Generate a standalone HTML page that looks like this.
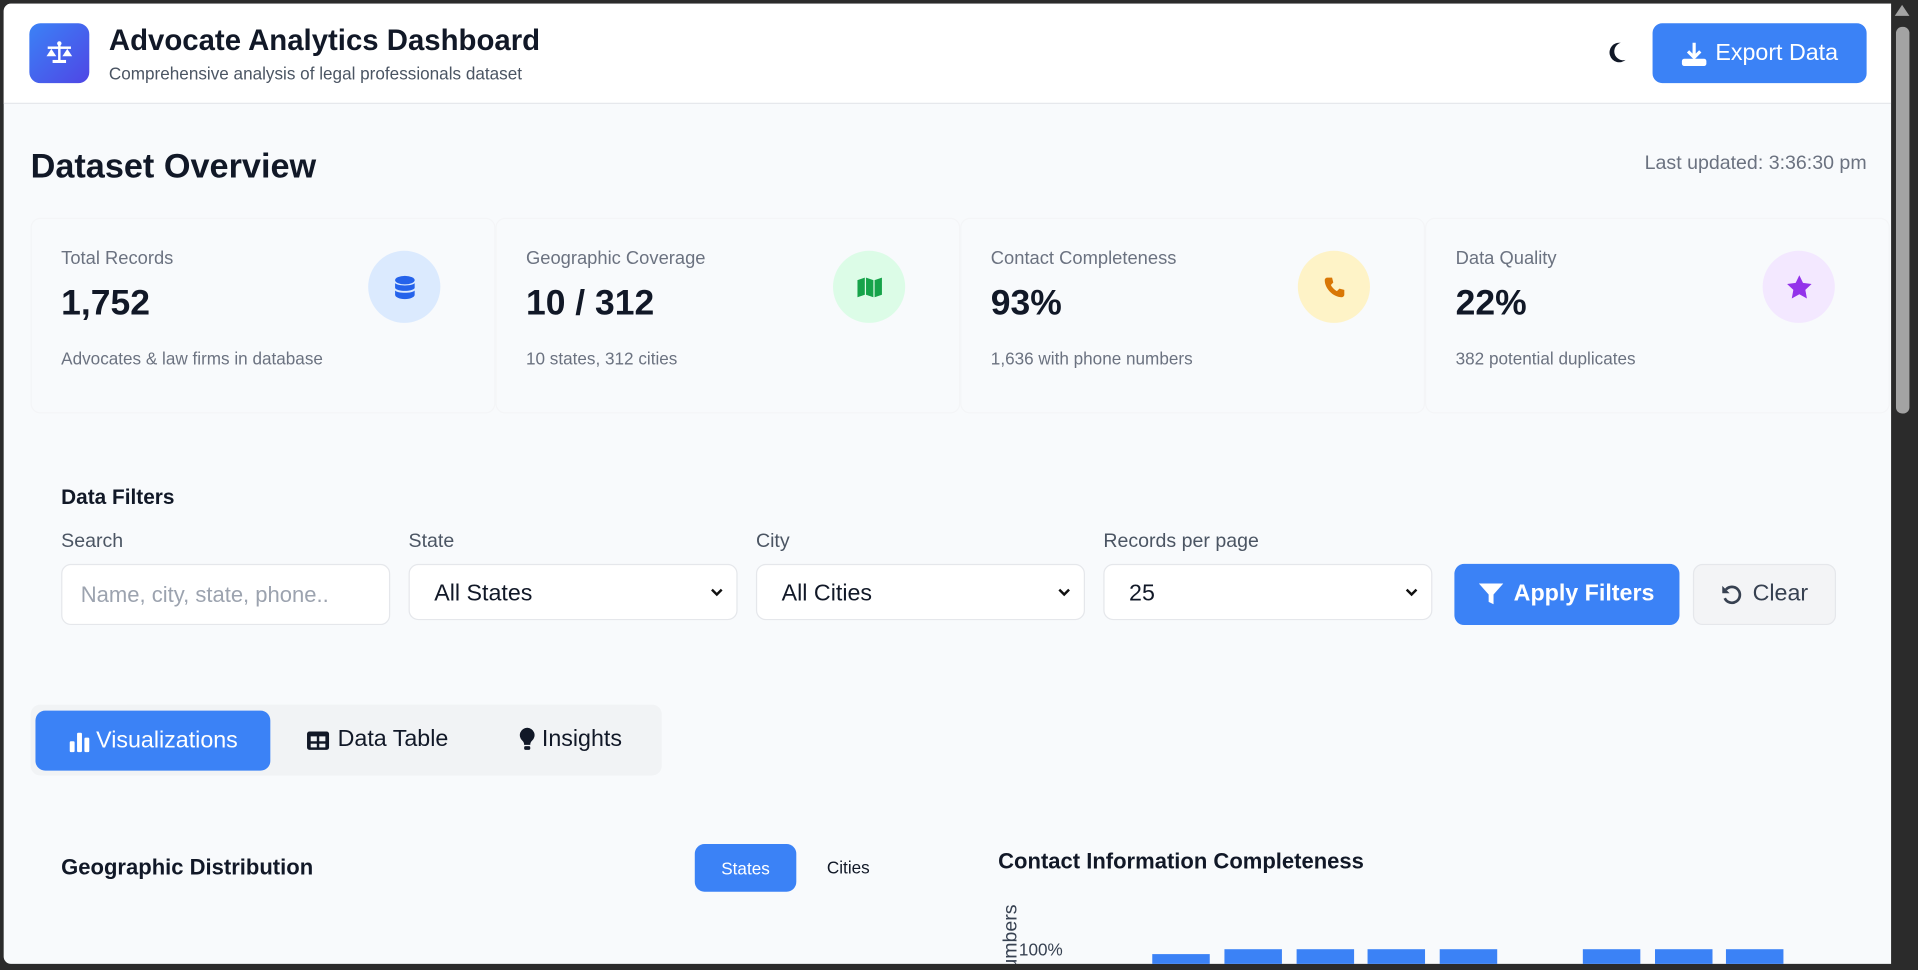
<!DOCTYPE html>
<html><head><meta charset="utf-8"><style>
*{box-sizing:border-box;margin:0;padding:0}
html,body{width:1918px;height:970px;overflow:hidden;background:#2b2b2b}
#w{position:absolute;left:0;top:0;width:1568px;height:793px;transform:scale(1.22321);transform-origin:0 0;font-family:"Liberation Sans",sans-serif;color:#111827}
.win{position:absolute;left:3px;top:3px;width:1543px;height:785px;background:#f8fafc;overflow:hidden;border-radius:6px 0 0 6px}
.hdr{position:absolute;left:0;top:0;width:1543px;height:82px;background:#fff;border-bottom:1px solid #e5e7eb}
.abs{position:absolute}
.logo{left:21px;top:16px;width:49px;height:49px;border-radius:9px;background:linear-gradient(135deg,#3b82f6,#4f46e5)}
.btn{background:#3b82f6;color:#fff;border-radius:8px;display:flex;align-items:center;justify-content:center}
.lbl{font-size:15px;color:#6b7280}
.val{font-size:29px;font-weight:bold;color:#111827}
.desc{font-size:14px;color:#6b7280}
.circ{width:59px;height:59px;border-radius:50%;display:flex;align-items:center;justify-content:center}
.card{top:175px;width:380px;height:160px;border:1px solid #f4f5f7;border-radius:8px}
.inp{top:458px;height:50px;border:1px solid #e5e7eb;border-radius:8px;background:#fff;font-size:19px;display:flex;align-items:center;padding-left:20px}
.sel{height:46px}
.chev{position:absolute;right:10px;top:16px}
.bar{position:absolute;background:#3b82f6;width:47px}
</style></head><body>
<div id="w">
<div class="abs" style="left:1546px;top:0;width:22px;height:793px;background:#2b2b2b"></div>
<div class="abs" style="left:1550px;top:22px;width:11px;height:316px;background:#a3a3a3;border-radius:5px"></div>
<div class="abs" style="left:1549px;top:4px;width:0;height:0;border-left:6px solid transparent;border-right:6px solid transparent;border-bottom:9px solid #a3a3a3"></div>
<div class="win">
<div class="hdr">
 <div class="abs logo"><svg width="49" height="49" viewBox="0 0 49 49"><g fill="#fff"><rect x="23.5" y="16" width="2" height="15"/><rect x="15" y="19" width="19" height="2"/><rect x="19" y="30" width="11" height="2.5"/><path d="M14 27h8l-4-6z"/><path d="M27 27h8l-4-6z"/><circle cx="24.5" cy="16.5" r="1.8"/></g></svg></div>
 <div class="abs" style="left:86px;top:17px;font-size:24px;font-weight:bold;color:#111827">Advocate Analytics Dashboard</div>
 <div class="abs" style="left:86px;top:49px;font-size:14px;color:#4b5563">Comprehensive analysis of legal professionals dataset</div>
 <svg class="abs" style="left:1311px;top:31px" width="16" height="18" viewBox="0 0 16 18"><path d="M11 1A8 8 0 1 0 15 15A6.5 6.5 0 1 1 11 1Z" fill="#111827"/></svg>
 <div class="abs btn" style="left:1348px;top:16px;width:175px;height:49px;font-size:19px"><svg width="22" height="20" viewBox="0 0 22 20" style="margin-right:6px"><path d="M11 1v11M6 8l5 5 5-5" stroke="#fff" stroke-width="2.6" fill="none"/><rect x="1" y="14" width="20" height="6" rx="2" fill="#fff"/></svg>Export Data</div>
</div>
<div class="abs" style="left:22px;top:117px;font-size:28px;font-weight:bold">Dataset Overview</div>
<div class="abs" style="right:20px;top:122px;font-size:16px;color:#6b7280">Last updated: 3:36:30 pm</div>

<div class="abs card" style="left:22px"></div><div class="abs card" style="left:402px"></div><div class="abs card" style="left:782px"></div><div class="abs card" style="left:1162px"></div>
<div class="abs lbl" style="left:47px;top:200px">Total Records</div>
<div class="abs val" style="left:47px;top:229px">1,752</div>
<div class="abs desc" style="left:47px;top:282px">Advocates &amp; law firms in database</div>
<div class="abs circ" style="left:298px;top:202px;background:#dbeafe"><svg width="18" height="20" viewBox="0 0 18 20"><g fill="#2563eb"><ellipse cx="9" cy="4" rx="8" ry="3.5"/><path d="M1 6.5c2 2.5 14 2.5 16 0v4c-2 3-14 3-16 0z"/><path d="M1 12.5c2 2.5 14 2.5 16 0v3.5c0 2-3.5 3.5-8 3.5s-8-1.5-8-3.5z"/></g></svg></div>

<div class="abs lbl" style="left:427px;top:200px">Geographic Coverage</div>
<div class="abs val" style="left:427px;top:229px">10 / 312</div>
<div class="abs desc" style="left:427px;top:282px">10 states, 312 cities</div>
<div class="abs circ" style="left:678px;top:202px;background:#dcfce7"><svg width="22" height="18" viewBox="0 0 22 18"><path d="M1 3l6-2v14l-6 2zM8 1l6 2v14l-6-2zM15 3l6-2v14l-6 2z" fill="#16a34a"/></svg></div>

<div class="abs lbl" style="left:807px;top:200px">Contact Completeness</div>
<div class="abs val" style="left:807px;top:229px">93%</div>
<div class="abs desc" style="left:807px;top:282px">1,636 with phone numbers</div>
<div class="abs circ" style="left:1058px;top:202px;background:#fef3c7"><svg width="18" height="18" viewBox="0 0 18 18"><path d="M3 1l4 0 1 4-2 2c1 2 3 4 5 5l2-2 4 1v4c0 1-1 2-2 2C8 17 1 10 1 3c0-1 1-2 2-2z" fill="#d97706"/></svg></div>

<div class="abs lbl" style="left:1187px;top:200px">Data Quality</div>
<div class="abs val" style="left:1187px;top:229px">22%</div>
<div class="abs desc" style="left:1187px;top:282px">382 potential duplicates</div>
<div class="abs circ" style="left:1438px;top:202px;background:#f3e8ff"><svg width="20" height="19" viewBox="0 0 20 19"><path d="M10 0l3 6.3 7 .9-5.1 4.8 1.3 7L10 15.6 3.8 19l1.3-7L0 7.2l7-.9z" fill="#9333ea"/></svg></div>

<div class="abs" style="left:47px;top:394px;font-size:17px;font-weight:bold">Data Filters</div>
<div class="abs" style="left:47px;top:431px;font-size:16px;color:#4b5563">Search</div>
<div class="abs" style="left:331px;top:431px;font-size:16px;color:#4b5563">State</div>
<div class="abs" style="left:615px;top:431px;font-size:16px;color:#4b5563">City</div>
<div class="abs" style="left:899px;top:431px;font-size:16px;color:#4b5563">Records per page</div>
<div class="abs inp" style="left:47px;width:269px;color:#9ca3af;padding-left:15px;font-size:18px">Name, city, state, phone..</div>
<div class="abs inp sel" style="left:331px;width:269px;padding-top:4px">All States<svg class="chev" width="12" height="12" viewBox="0 0 12 12"><path d="M2 4l4 4 4-4" stroke="#111" stroke-width="2" fill="none"/></svg></div>
<div class="abs inp sel" style="left:615px;width:269px;padding-top:4px">All Cities<svg class="chev" width="12" height="12" viewBox="0 0 12 12"><path d="M2 4l4 4 4-4" stroke="#111" stroke-width="2" fill="none"/></svg></div>
<div class="abs inp sel" style="left:899px;width:269px;padding-top:4px">25<svg class="chev" width="12" height="12" viewBox="0 0 12 12"><path d="M2 4l4 4 4-4" stroke="#111" stroke-width="2" fill="none"/></svg></div>
<div class="abs btn" style="left:1186px;top:458px;width:184px;height:50px;font-size:19px;font-weight:bold"><svg width="20" height="18" viewBox="0 0 20 18" style="margin-right:8px"><path d="M0 0h20l-8 9v8l-4-2V9z" fill="#fff"/></svg>Apply Filters</div>
<div class="abs" style="left:1381px;top:458px;width:117px;height:50px;border:1px solid #e5e7eb;border-radius:8px;background:#f3f4f6;display:flex;align-items:center;justify-content:center;font-size:19px;color:#374151"><svg width="18" height="18" viewBox="0 0 18 18" style="margin-right:8px"><path d="M4 5A6.5 6.5 0 1 1 3 12" stroke="#374151" stroke-width="2.2" fill="none"/><path d="M1 2v6h6z" fill="#374151"/></svg>Clear</div>

<div class="abs" style="left:22px;top:573px;width:516px;height:58px;background:#f1f3f5;border-radius:8px"></div>
<div class="abs btn" style="left:26px;top:578px;width:192px;height:49px;font-size:19px"><svg width="18" height="18" viewBox="0 0 18 18" style="margin-right:5px"><g fill="#fff"><rect x="1" y="9" width="4" height="9" rx="1"/><rect x="7" y="2" width="4" height="16" rx="1"/><rect x="13" y="6" width="4" height="12" rx="1"/></g></svg>Visualizations</div>
<div class="abs" style="left:247px;top:591px;font-size:19px;display:flex;align-items:center"><svg width="20" height="17" viewBox="0 0 20 17" style="margin-right:6px"><rect x="1" y="1" width="18" height="15" rx="2" fill="#111827"/><g fill="#f1f3f5"><rect x="4" y="5" width="5" height="4"/><rect x="11" y="5" width="5" height="4"/><rect x="4" y="11" width="5" height="3"/><rect x="11" y="11" width="5" height="3"/></g></svg>Data Table</div>
<div class="abs" style="left:421px;top:591px;font-size:19px;display:flex;align-items:center"><svg width="14" height="22" viewBox="0 0 14 22" style="margin-right:5px"><path d="M7 1a6 6 0 0 0-4 10.5c1 1 1.5 2 1.5 3.5h5c0-1.5.5-2.5 1.5-3.5A6 6 0 0 0 7 1z" fill="#111827"/><rect x="4.5" y="16" width="5" height="3" rx="1" fill="#111827"/></svg>Insights</div>

<div class="abs" style="left:47px;top:696px;font-size:18px;font-weight:bold">Geographic Distribution</div>
<div class="abs btn" style="left:565px;top:687px;width:83px;height:39px;font-size:14px">States</div>
<div class="abs" style="left:673px;top:698px;font-size:14px">Cities</div>
<div class="abs" style="left:813px;top:691px;font-size:18px;font-weight:bold">Contact Information Completeness</div>
<div class="abs" style="left:815px;font-size:16px;color:#374151;transform:rotate(-90deg);transform-origin:left top;top:852px;white-space:nowrap">Phone Numbers</div>
<div class="abs" style="left:830px;top:765px;font-size:14px;color:#374151">100%</div>
<div class="bar" style="left:939px;top:777px;height:20px"></div>
<div class="bar" style="left:998px;top:773px;height:20px"></div>
<div class="bar" style="left:1057px;top:773px;height:20px"></div>
<div class="bar" style="left:1115px;top:773px;height:20px"></div>
<div class="bar" style="left:1174px;top:773px;height:20px"></div>
<div class="bar" style="left:1291px;top:773px;height:20px"></div>
<div class="bar" style="left:1350px;top:773px;height:20px"></div>
<div class="bar" style="left:1408px;top:773px;height:20px"></div>
</div>
</div>
</body></html>
